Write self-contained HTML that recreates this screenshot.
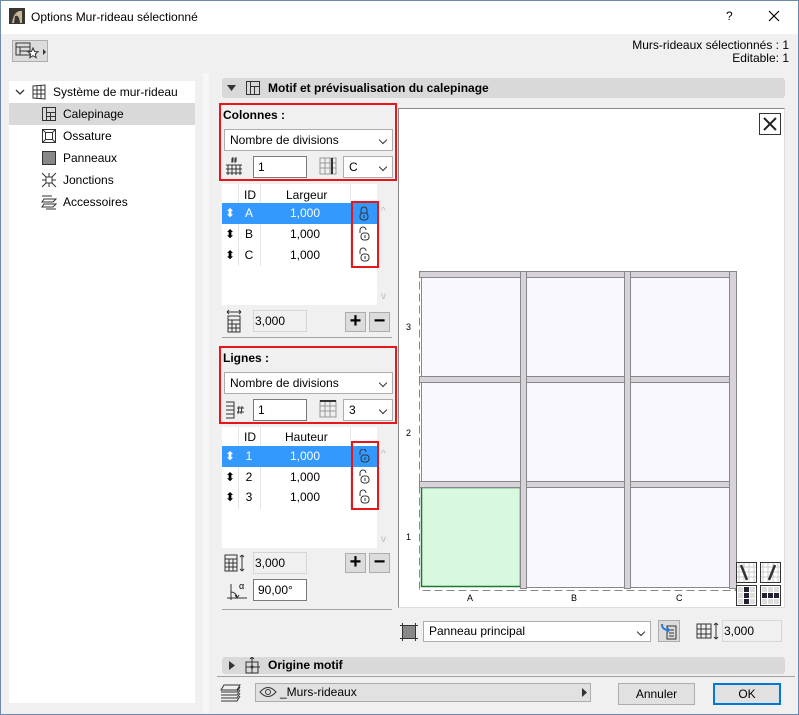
<!DOCTYPE html>
<html><head><meta charset="utf-8"><style>
*{box-sizing:border-box;margin:0;padding:0}
body{width:799px;height:715px;background:#f0f0f0;font-family:"Liberation Sans",sans-serif;font-size:12px;color:#000;position:relative;overflow:hidden}
.a{position:absolute}
.t{position:absolute;white-space:nowrap;line-height:14px}
.inp{position:absolute;background:#fff;border:1px solid #7a7a7a;padding-left:4px;line-height:20px}
.dis{position:absolute;background:#f0f0f0;border:1px solid #d6d6d6;padding-left:1px;line-height:20px}
.sel{position:absolute;background:#fff;border:1px solid #adadad;padding-left:5px;line-height:20px}
.chev{position:absolute;right:6px;top:7px;width:6px;height:6px;border-right:1px solid #333;border-bottom:1px solid #333;transform:rotate(45deg)}
.red{position:absolute;border:2px solid #e8151b}
.btn{position:absolute;background:#e1e1e1;border:1px solid #adadad;text-align:center;line-height:20px}
.hdr{position:absolute;background:#d9d9d9;border-radius:3px}
.row{position:absolute;left:222px;width:155px;height:21px;line-height:21px}
.row span{position:absolute;text-align:center}
.pm{position:absolute;width:21px;height:20px;background:#dcdcdc;border:1px solid #adadad;text-align:center;font-size:20px;line-height:17px;font-weight:bold}
</style></head><body>
<div class="a" style="left:0;top:0;width:799px;height:715px;border:1px solid #6e8aa8"></div>
<div class="a" style="left:1px;top:1px;width:797px;height:33px;background:#fff"></div>
<svg class="a" style="left:9px;top:8px" width="16" height="16"><rect width="16" height="16" fill="#3a3530"/><path d="M3 15 Q5 2 13 3 L13 15 L11 15 Q10 6 6 8 L5 15Z" fill="#c8b89a"/></svg>
<div class="t" style="left:31px;top:10px;font-size:12px">Options Mur-rideau sélectionné</div>
<div class="t" style="left:726px;top:9px">?</div>
<svg class="a" style="left:768px;top:10px" width="12" height="12"><path d="M1 1l10 10M11 1L1 11" stroke="#000" stroke-width="1.2"/></svg>
<div class="a" style="left:12px;top:40px;width:36px;height:22px;background:#dcdcdc;border:1px solid #adadad"></div>
<svg class="a" style="left:15px;top:42px" width="32" height="19"><path d="M1 1h14v12H1zM1 5h14M5 5v8M5 9h10" fill="none" stroke="#333"/><path d="M18 6l1.5 3.5 3.5.3-2.7 2.3.9 3.6-3.2-2-3.2 2 .9-3.6-2.7-2.3 3.5-.3z" fill="#fff" stroke="#333"/><path d="M28 7l3 3-3 3z" fill="#333"/></svg>
<div class="t" style="right:10px;top:39px;text-align:right;line-height:13px">Murs-rideaux sélectionnés : 1<br>Editable: 1</div>

<div class="a" style="left:9px;top:81px;width:186px;height:622px;background:#fff"></div>
<div class="a" style="left:9px;top:103px;width:186px;height:22px;background:#d9d9d9"></div>
<svg class="a" style="left:15px;top:87px" width="10" height="10"><path d="M1 3l4 4 4-4" fill="none" stroke="#333" stroke-width="1.3"/></svg>
<svg class="a" style="left:31px;top:84px" width="16" height="16"><path d="M2 2l12-1v14L2 14z M2 6h12M2 10h12M6 2v12M10 1v14" fill="none" stroke="#333"/></svg>
<div class="t" style="left:53px;top:85px">Système de mur-rideau</div>
<svg class="a" style="left:41px;top:106px" width="16" height="16"><path d="M1.5 1.5h13v13h-13zM5.5 1.5v13M5.5 6.5h9M9.5 10.5h5M9.5 6.5v8M5.5 10.5h4" fill="none" stroke="#333"/></svg>
<div class="t" style="left:63px;top:107px">Calepinage</div>
<svg class="a" style="left:41px;top:128px" width="16" height="16"><rect x="1.5" y="1.5" width="13" height="13" fill="none" stroke="#333"/><rect x="4.5" y="4.5" width="7" height="7" fill="none" stroke="#333"/><path d="M1.5 1.5l3 3M14.5 1.5l-3 3M1.5 14.5l3-3M14.5 14.5l-3-3" stroke="#333"/></svg>
<div class="t" style="left:63px;top:129px">Ossature</div>
<svg class="a" style="left:41px;top:150px" width="16" height="16"><rect x="1.5" y="1.5" width="13" height="13" fill="#888" stroke="#333"/></svg>
<div class="t" style="left:63px;top:151px">Panneaux</div>
<svg class="a" style="left:41px;top:172px" width="16" height="16"><path d="M1 1l14 14M15 1L1 15M8 1v14M1 8h14" stroke="#333"/><rect x="5" y="5" width="6" height="6" fill="#fff" stroke="#333"/></svg>
<div class="t" style="left:63px;top:173px">Jonctions</div>
<svg class="a" style="left:41px;top:194px" width="16" height="16"><path d="M1 2h10M3 5h12l-3 3H1zM3 10h12l-3 3H1zM5 15h10" fill="none" stroke="#333"/></svg>
<div class="t" style="left:63px;top:195px">Accessoires</div>

<div class="a" style="left:203px;top:73px;width:6px;height:640px;background:#f7f7f7"></div>
<div class="hdr" style="left:222px;top:78px;width:563px;height:20px"></div>
<svg class="a" style="left:227px;top:84px" width="9" height="8"><path d="M0 1h9L4.5 7z" fill="#333"/></svg>
<svg class="a" style="left:245px;top:80px" width="16" height="16"><path d="M1.5 1.5h13v13h-13zM5.5 1.5v13M5.5 6.5h9M9.5 6.5v8" fill="none" stroke="#333"/></svg>
<div class="t" style="left:268px;top:81px;font-weight:bold">Motif et prévisualisation du calepinage</div>

<div class="t" style="left:223px;top:108px;font-weight:bold">Colonnes :</div>
<div class="sel" style="left:224px;top:129px;width:169px;height:22px">Nombre de divisions<div class="chev"></div></div>
<svg class="a" style="left:225px;top:156px" width="18" height="20"><path d="M1 9h16M1 13h16M1 17h16M3 9v10M7 9v10M11 9v10M15 9v10M8 1l-1 6M11 1l-1 6M6 3h6M6 5h6" fill="none" stroke="#333"/></svg>
<div class="inp" style="left:253px;top:156px;width:54px;height:22px">1</div>
<svg class="a" style="left:319px;top:157px" width="18" height="18"><path d="M1 1h16v16H1zM1 6h16M1 11h16M6 1v16M11 1v16" fill="none" stroke="#999"/><path d="M13 1v16" stroke="#333" stroke-width="2"/></svg>
<div class="sel" style="left:343px;top:156px;width:50px;height:22px">C<div class="chev"></div></div>
<div class="red" style="left:219px;top:103px;width:178px;height:78px"></div>

<div class="a" style="left:222px;top:184px;width:155px;height:121px;background:#fff"></div>
<div class="a" style="left:238px;top:184px;width:1px;height:82px;background:#e5e5e5"></div>
<div class="a" style="left:260px;top:184px;width:1px;height:82px;background:#e5e5e5"></div>
<div class="a" style="left:350px;top:184px;width:1px;height:82px;background:#e5e5e5"></div>
<div class="t" style="left:244px;top:188px">ID</div>
<div class="t" style="left:286px;top:188px">Largeur</div>
<div class="row" style="top:203px;background:#3399ff;color:#fff"><span style="left:0;width:16px">⬍</span><span style="left:16px;width:22px">A</span><span style="left:38px;width:90px">1,000</span></div>
<div class="row" style="top:224px"><span style="left:0;width:16px">⬍</span><span style="left:16px;width:22px">B</span><span style="left:38px;width:90px">1,000</span></div>
<div class="row" style="top:245px"><span style="left:0;width:16px">⬍</span><span style="left:16px;width:22px">C</span><span style="left:38px;width:90px">1,000</span></div>
<svg class="a" style="left:358px;top:206px" width="14" height="60"><g fill="none" stroke="#333"><path d="M3 7V4a3 3 0 0 1 6 0v3"/><rect x="2" y="7" width="8" height="7" rx="3"/><path d="M6 9v3"/><g transform="translate(0,21)"><path d="M2 6V3a3 3 0 0 1 6 0"/><rect x="3" y="6" width="8" height="7" rx="3"/><path d="M7 8v3"/></g><g transform="translate(0,42)"><path d="M2 6V3a3 3 0 0 1 6 0"/><rect x="3" y="6" width="8" height="7" rx="3"/><path d="M7 8v3"/></g></g></svg>
<div class="red" style="left:351px;top:201px;width:28px;height:67px"></div>
<div class="t" style="left:381px;top:205px;color:#bbb;font-size:10px">^</div>
<div class="t" style="left:381px;top:290px;color:#bbb;font-size:10px">v</div>
<svg class="a" style="left:225px;top:309px" width="18" height="24"><path d="M2 3h14M2 3l2-2M2 3l2 2M16 3l-2-2M16 3l-2 2M3 7h12v16H3zM3 11h12M3 15h12M3 19h12M7 11v12M11 15v8" fill="none" stroke="#333"/></svg>
<div class="dis" style="left:253px;top:310px;width:54px;height:22px">3,000</div>
<div class="pm" style="left:345px;top:312px">+</div>
<div class="pm" style="left:369px;top:312px">−</div>
<div class="a" style="left:222px;top:337px;width:170px;height:1px;background:#a0a0a0"></div>

<div class="t" style="left:223px;top:351px;font-weight:bold">Lignes :</div>
<div class="sel" style="left:224px;top:372px;width:169px;height:22px">Nombre de divisions<div class="chev"></div></div>
<svg class="a" style="left:225px;top:401px" width="20" height="18"><path d="M1 1h8v16H1M1 5h8M1 9h8M1 13h8M9 1v16M12 7h7M12 11h7M14 5l-1 8M17 5l-1 8" fill="none" stroke="#333"/></svg>
<div class="inp" style="left:253px;top:399px;width:54px;height:22px">1</div>
<svg class="a" style="left:319px;top:400px" width="18" height="18"><path d="M1 1h16v16H1zM1 6h16M1 11h16M6 1v16M11 1v16" fill="none" stroke="#999"/><path d="M1 1h16" stroke="#333" stroke-width="2"/></svg>
<div class="sel" style="left:343px;top:399px;width:50px;height:22px">3<div class="chev"></div></div>
<div class="red" style="left:219px;top:346px;width:178px;height:78px"></div>

<div class="a" style="left:222px;top:427px;width:155px;height:121px;background:#fff"></div>
<div class="a" style="left:238px;top:427px;width:1px;height:82px;background:#e5e5e5"></div>
<div class="a" style="left:260px;top:427px;width:1px;height:82px;background:#e5e5e5"></div>
<div class="a" style="left:350px;top:427px;width:1px;height:82px;background:#e5e5e5"></div>
<div class="t" style="left:244px;top:430px">ID</div>
<div class="t" style="left:285px;top:430px">Hauteur</div>
<div class="row" style="top:446px;background:#3399ff;color:#fff"><span style="left:0;width:16px">⬍</span><span style="left:16px;width:22px">1</span><span style="left:38px;width:90px">1,000</span></div>
<div class="row" style="top:467px"><span style="left:0;width:16px">⬍</span><span style="left:16px;width:22px">2</span><span style="left:38px;width:90px">1,000</span></div>
<div class="row" style="top:487px"><span style="left:0;width:16px">⬍</span><span style="left:16px;width:22px">3</span><span style="left:38px;width:90px">1,000</span></div>
<svg class="a" style="left:358px;top:449px" width="14" height="60"><g fill="none" stroke="#333"><path d="M2 6V3a3 3 0 0 1 6 0"/><rect x="3" y="6" width="8" height="7" rx="3"/><path d="M7 8v3"/><g transform="translate(0,21)"><path d="M2 6V3a3 3 0 0 1 6 0"/><rect x="3" y="6" width="8" height="7" rx="3"/><path d="M7 8v3"/></g><g transform="translate(0,41)"><path d="M2 6V3a3 3 0 0 1 6 0"/><rect x="3" y="6" width="8" height="7" rx="3"/><path d="M7 8v3"/></g></g></svg>
<div class="red" style="left:351px;top:441px;width:28px;height:69px"></div>
<div class="t" style="left:381px;top:448px;color:#bbb;font-size:10px">^</div>
<div class="t" style="left:381px;top:533px;color:#bbb;font-size:10px">v</div>
<svg class="a" style="left:224px;top:553px" width="22" height="20"><path d="M1 2h12v16H1zM1 6h12M1 10h12M1 14h12M5 6v12M9 6v12M18 2v16M18 2l-2 2M18 2l2 2M18 18l-2-2M18 18l2-2" fill="none" stroke="#333"/></svg>
<div class="dis" style="left:253px;top:552px;width:54px;height:22px">3,000</div>
<div class="pm" style="left:345px;top:553px">+</div>
<div class="pm" style="left:369px;top:553px">−</div>
<svg class="a" style="left:225px;top:580px" width="24" height="20"><path d="M2 18h20M6 4v16M6 12a6 6 0 0 1 6 6M10 15l2 3 2-3" fill="none" stroke="#333"/><text x="14" y="9" font-size="9" font-family="Liberation Sans">α</text></svg>
<div class="inp" style="left:253px;top:579px;width:54px;height:22px">90,00°</div>
<div class="a" style="left:222px;top:609px;width:170px;height:1px;background:#a0a0a0"></div>

<div class="a" style="left:398px;top:108px;width:387px;height:500px;background:#fff;border-top:1px solid #888;border-left:1px solid #888;border-right:1px solid #ddd;border-bottom:1px solid #ddd"></div>
<div class="a" style="left:759px;top:113px;width:22px;height:22px;border:1px solid #333"></div>
<svg class="a" style="left:762px;top:116px" width="16" height="16"><path d="M2 2l12 12M14 2L2 14" stroke="#222" stroke-width="2"/></svg>
<svg class="a" style="left:400px;top:260px" width="340" height="345">
<rect x="19.5" y="15.5" width="316" height="315" fill="none" stroke="#888" stroke-dasharray="8,4"/>
<g fill="#f8f8fe" stroke="#888"><rect x="21.5" y="17.5" width="99" height="100"/><rect x="126.5" y="17.5" width="98" height="100"/><rect x="230.5" y="17.5" width="99" height="100"/>
<rect x="21.5" y="122.5" width="99" height="100"/><rect x="126.5" y="122.5" width="98" height="100"/><rect x="230.5" y="122.5" width="99" height="100"/>
<rect x="126.5" y="227.5" width="98" height="100"/><rect x="230.5" y="227.5" width="99" height="100"/></g>
<rect x="21.5" y="227.5" width="99" height="99" fill="#d8f8e0" stroke="#1a7a30" stroke-width="1.5"/>
<g fill="#d8d3da" stroke="#888"><rect x="19.5" y="11.5" width="311" height="6"/><rect x="19.5" y="116.5" width="311" height="6"/><rect x="19.5" y="221.5" width="311" height="6"/>
<rect x="120.5" y="11.5" width="6" height="317"/><rect x="224.5" y="11.5" width="6" height="317"/><rect x="329.5" y="11.5" width="7" height="317"/></g>
<g font-family="Liberation Sans" font-size="9"><text x="6" y="70">3</text><text x="6" y="176">2</text><text x="6" y="280">1</text><text x="67" y="341">A</text><text x="171" y="341">B</text><text x="276" y="341">C</text></g>
</svg>
<svg class="a" style="left:735px;top:561px" width="48" height="45"><g stroke="#ccc"><path d="M4 1v20M9 1v20M14 1v20M19 1v20M1 6h20M1 11h20M1 16h20"/><path d="M28 1v20M33 1v20M38 1v20M43 1v20M25 6h20M25 11h20M25 16h20"/></g>
<rect x="1.5" y="1.5" width="20" height="20" fill="none" stroke="#333"/><rect x="25.5" y="1.5" width="20" height="20" fill="none" stroke="#333"/><path d="M6 4l6 15M40 4l-6 15" stroke="#333" stroke-width="2.5"/>
<rect x="1.5" y="24.5" width="20" height="20" fill="#fff" stroke="#333"/><rect x="25.5" y="24.5" width="20" height="20" fill="#fff" stroke="#333"/>
<g fill="#ddd"><rect x="3" y="26" width="5" height="5"/><rect x="15" y="26" width="5" height="5"/><rect x="3" y="32" width="5" height="5"/><rect x="15" y="32" width="5" height="5"/><rect x="3" y="38" width="5" height="5"/><rect x="15" y="38" width="5" height="5"/>
<rect x="27" y="26" width="5" height="5"/><rect x="33" y="26" width="5" height="5"/><rect x="39" y="26" width="5" height="5"/><rect x="27" y="38" width="5" height="5"/><rect x="33" y="38" width="5" height="5"/><rect x="39" y="38" width="5" height="5"/></g>
<g fill="#223"><rect x="9" y="26" width="5" height="5"/><rect x="9" y="32" width="5" height="5"/><rect x="9" y="38" width="5" height="5"/><rect x="27" y="32" width="5" height="5"/><rect x="33" y="32" width="5" height="5"/><rect x="39" y="32" width="5" height="5"/></g></svg>

<svg class="a" style="left:400px;top:623px" width="18" height="18"><rect x="2.5" y="2.5" width="13" height="13" fill="#888" stroke="#333"/><path d="M0 2.5h18M0 15.5h18M2.5 0v18M15.5 0v18" stroke="#333"/></svg>
<div class="sel" style="left:423px;top:621px;width:228px;height:21px;line-height:19px">Panneau principal<div class="chev"></div></div>
<div class="a" style="left:658px;top:620px;width:22px;height:22px;background:#dcdcdc;border:1px solid #adadad"></div>
<svg class="a" style="left:660px;top:622px" width="18" height="18"><path d="M7 4h9v13H7zM9 8h5M9 11h5M9 14h5" fill="none" stroke="#333"/><path d="M2 2c0 5 3 6 7 6M7 6l2 2-2 2" fill="none" stroke="#2a7ad8" stroke-width="2"/></svg>
<svg class="a" style="left:696px;top:621px" width="24" height="20"><path d="M1 3h14v14H1zM1 8h14M1 13h14M5 3v14M10 3v14M20 2v16M20 2l-2 2M20 2l2 2M20 18l-2-2M20 18l2-2" fill="none" stroke="#333"/></svg>
<div class="dis" style="left:722px;top:620px;width:60px;height:22px">3,000</div>

<div class="hdr" style="left:222px;top:657px;width:563px;height:17px"></div>
<svg class="a" style="left:229px;top:661px" width="6" height="9"><path d="M0 0l6 4.5L0 9z" fill="#333"/></svg>
<svg class="a" style="left:244px;top:657px" width="16" height="18"><path d="M2 5h12v11H2zM2 10h12M8 5v11M8 0v5M6 2l2-2 2 2M14 10h2" fill="none" stroke="#333"/><circle cx="8" cy="10" r="1.5" fill="#333"/></svg>
<div class="t" style="left:268px;top:658px;font-weight:bold">Origine motif</div>
<div class="a" style="left:217px;top:676px;width:578px;height:1px;background:#a0a0a0"></div>

<svg class="a" style="left:219px;top:684px" width="24" height="18"><path d="M5 1h16l-3 5H2zM2 8h16l3-5M2 11h16l3-5M2 14h16l3-5M2 17h16l3-5" fill="none" stroke="#333"/></svg>
<div class="a" style="left:255px;top:683px;width:336px;height:19px;background:#e1e1e1;border:1px solid #adadad"></div>
<svg class="a" style="left:259px;top:686px" width="18" height="12"><path d="M1 6q8-9 16 0q-8 9-16 0z" fill="none" stroke="#333"/><circle cx="9" cy="6" r="2.5" fill="none" stroke="#333"/></svg>
<div class="t" style="left:280px;top:685px">_Murs-rideaux</div>
<svg class="a" style="left:582px;top:688px" width="5" height="9"><path d="M0 0l5 4.5L0 9z" fill="#333"/></svg>
<div class="btn" style="left:618px;top:683px;width:77px;height:22px">Annuler</div>
<div class="btn" style="left:713px;top:683px;width:68px;height:22px;border:2px solid #0078d7;line-height:18px">OK</div>
</body></html>
